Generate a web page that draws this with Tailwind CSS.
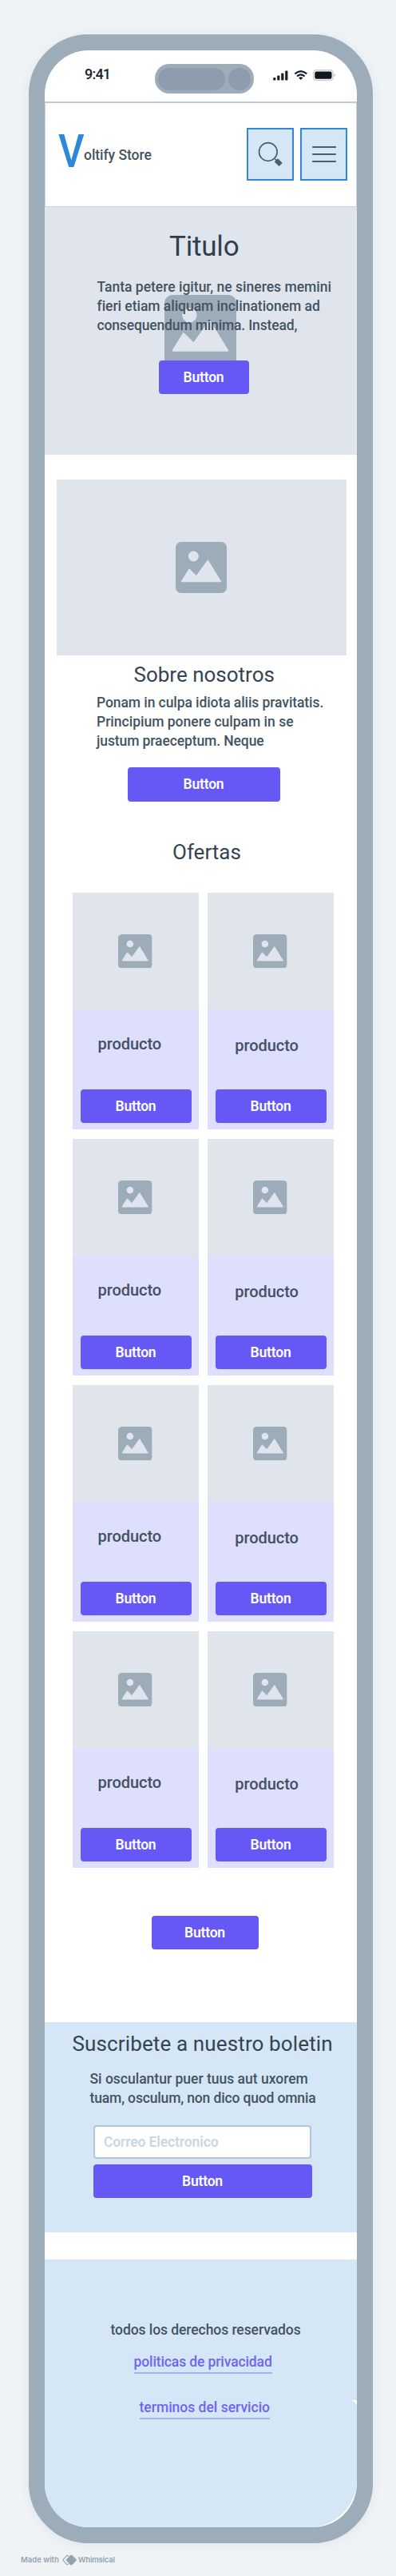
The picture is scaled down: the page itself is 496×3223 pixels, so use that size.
<!DOCTYPE html>
<html lang="es">
<head>
<meta charset="utf-8">
<title>Voltify Store</title>
<script src="https://cdn.jsdelivr.net/npm/@tailwindcss/browser@4"></script>
</head>
<body class="w-[496px] h-[3223px] overflow-hidden bg-[#eff3f6] font-['Roboto','Liberation_Sans',sans-serif] text-[17.5px] leading-6 font-medium text-[#435361]">
<svg class="hidden">
  <symbol id="picture" viewBox="0 0 64 64">
    <rect width="64" height="64" rx="7" fill="#9dacb9"/>
    <circle cx="22.3" cy="18" r="6.5" fill="#e0e5ed"/>
    <path d="M7.6 49.5 17 34.3 26 43.2 40.3 23.4 56.2 49.5Z" fill="#e0e5ed" stroke="#e0e5ed" stroke-width="1.5" stroke-linejoin="round"/>
  </symbol>
</svg>

<div class="ml-9 mt-[43px] w-[431px] h-[3139px] rounded-[75px] border-[20px] border-[#9dacb9] bg-[#9dacb9] shadow-[0_2px_14px_rgba(60,80,100,0.08)]">
<div class="w-[391px] h-[3099px] rounded-[55px] bg-white overflow-hidden">

  <!-- Status bar -->
  <div class="flex h-[64px] items-start">
    <div class="ml-[50px] mt-[18px] w-[87.5px] text-[18px] tracking-[-0.8px] text-[#1a232c]">9:41</div>
    <div class="mt-[17px] flex h-[37px] w-[124px] items-center gap-1 rounded-[18px] bg-[#9dacb9] pl-[4px]">
      <div class="h-7 w-[84px] rounded-full bg-[#8d9dae]"></div>
      <div class="h-7 w-7 rounded-full bg-[#8d9dae]"></div>
    </div>
    <svg class="ml-[24px] mt-[24px]" width="79" height="15" viewBox="0 0 79 15">
      <g fill="#16202a">
        <rect x="0.2" y="10" width="3.2" height="3.6" rx="1"/><rect x="5.2" y="7.6" width="3.2" height="6" rx="1"/><rect x="10.2" y="4.4" width="3.2" height="9.2" rx="1"/><rect x="15.2" y="1.5" width="3.2" height="12.1" rx="1"/>
        <path d="M32.1 10.2 34.8 13 37.5 10.2Q34.8 8.4 32.1 10.2Z"/>
      </g>
      <path d="M27.4 5.4Q34.8-1 42.2 5.4M30 8.5Q34.8 4.4 39.6 8.5" fill="none" stroke="#16202a" stroke-width="2.2"/>
      <rect x="50.6" y="0.8" width="24.6" height="12.6" rx="3.6" fill="#fff" stroke="#cfcfd1" stroke-width="1.5"/>
      <rect x="52.3" y="2.5" width="21.2" height="9.2" rx="2" fill="#0e1821"/>
      <path d="M76.5 5Q78.3 5.5 78.3 7T76.5 9.2Z" fill="#cfcfd1"/>
    </svg>
  </div>

  <!-- Header -->
  <header class="flex h-[132px] border border-t-2 border-[#cbd6e0] border-t-[#bccbd7] bg-white">
    <div class="ml-[16px] mt-[28px] w-[33px] shrink-0 origin-left scale-x-[0.87] text-[58px] leading-[64px] font-medium text-[#2d88dc]">V</div>
    <div class="mt-[53px] w-[203px] shrink-0 tracking-[-0.05px]"><span class="-ml-px">oltify Store</span></div>
    <div class="mt-[31px] flex h-[66px] gap-2">
      <div class="flex w-[59px] items-center justify-center border-2 border-[#2d88dc] bg-[#d5e6f6]">
        <svg width="32" height="32" viewBox="0 0 32 32" fill="none"><circle cx="12.8" cy="13" r="11.3" stroke="#4d5e6b" stroke-width="1.7"/><path d="M21.3 21.8 24 24.5" stroke="#4d5e6b" stroke-width="1.7"/><path d="M22.9 23.3 28.6 29" stroke="#4d5e6b" stroke-width="6"/></svg>
      </div>
      <div class="flex w-[59px] items-center justify-center border-2 border-[#2d88dc] bg-[#d5e6f6]">
        <svg width="30" height="22" viewBox="0 0 30 22"><path d="M0.8 2H29.2M0.8 11H29.2M0.8 20H29.2" stroke="#4d5e6b" stroke-width="1.8" stroke-linecap="round"/></svg>
      </div>
    </div>
  </header>

  <!-- Hero -->
  <section class="relative h-[310px] bg-[#e0e5ed] pt-[30px]">
    <svg class="absolute left-[150px] top-[110px] h-[90px] w-[90px]"><use href="#picture"/></svg>
    <div class="relative">
      <h1 class="ml-[156px] text-[35px] leading-10 font-normal tracking-[-0.2px] text-[#2f3f4c]">Titulo</h1>
      <p class="ml-[65.5px] mt-[18px] whitespace-nowrap">Tanta petere igitur, ne sineres memini<br><span class="tracking-[-0.03px]">fieri etiam aliquam inclinationem ad</span><br><span class="tracking-[-0.15px]">consequendum minima. Instead,</span></p>
      <button class="ml-[142.5px] mt-8 block h-[42px] w-[113px] rounded-[4px] bg-[#6558f5] font-semibold tracking-[-0.2px] text-white">Button</button>
    </div>
  </section>

  <!-- About -->
  <section class="h-[548px] pt-[31px]">
    <div class="ml-[14.5px] flex h-[220px] w-[363.5px] items-center justify-center bg-[#e0e5ed]"><svg class="h-16 w-16"><use href="#picture"/></svg></div>
    <h2 class="ml-[111.5px] mt-2 text-[26px] leading-8 font-normal text-[#344451]">Sobre nosotros</h2>
    <p class="ml-[65px] mt-[7px] whitespace-nowrap"><span class="tracking-[-0.08px]">Ponam in culpa idiota aliis pravitatis.</span><br>Principium ponere culpam in se<br><span class="tracking-[-0.1px]">justum praeceptum. Neque</span></p>
    <button class="ml-[103.5px] mt-[21px] block h-[42.5px] w-[191px] rounded-[4px] bg-[#6558f5] font-semibold tracking-[-0.2px] text-white">Button</button>
    <h2 class="ml-[160px] mt-[47px] text-[26px] leading-8 font-normal text-[#344451]">Ofertas</h2>
  </section>

  <!-- Products -->
  <section id="products" class="ml-[34.5px] grid h-[1220px] w-[327.4px] grid-cols-2 content-start gap-x-[10.7px] gap-y-3"></section>

  <!-- See more -->
  <div class="h-[193px] pt-[60px]"><button class="ml-[133.5px] block h-[42px] w-[134px] rounded-[4px] bg-[#6558f5] font-semibold tracking-[-0.2px] text-white">Button</button></div>

  <!-- Newsletter -->
  <section class="h-[263px] bg-[#d5e6f6] pt-[11px]">
    <h2 class="ml-[34.5px] whitespace-nowrap text-[26px] leading-8 font-normal tracking-[0.13px] text-[#344451]">Suscribete a nuestro boletin</h2>
    <p class="ml-[56.5px] mt-4 whitespace-nowrap">Si osculantur puer tuus aut uxorem<br><span class="tracking-[-0.15px]">tuam, osculum, non dico quod omnia</span></p>
    <div class="ml-[61px] mt-[22px] flex h-[42px] w-[273px] items-center rounded-[4px] border-2 border-[#b5c5d4] bg-white pl-[11px] font-semibold tracking-[-0.12px] text-[#cad6e1]">Correo Electronico</div>
    <button class="ml-[60.5px] mt-[7px] block h-[42px] w-[274px] rounded-[4px] bg-[#6558f5] font-semibold tracking-[-0.2px] text-white">Button</button>
  </section>

  <!-- Footer -->
  <footer class="relative mt-[34px] flex h-[335px] flex-col items-start rounded-br-[60px] bg-[#d5e6f6] pt-[76px] leading-6">
    <p class="ml-[82.5px] tracking-[-0.07px]">todos los derechos reservados</p>
    <a class="ml-[111.5px] mt-4 h-[27px] whitespace-nowrap border-b-2 border-[#a9aff6] tracking-[-0.11px] text-[#6f64f6]">politicas de privacidad</a>
    <a class="ml-[118.5px] mt-[30px] h-[27px] whitespace-nowrap border-b-2 border-[#a9aff6] text-[#6f64f6]">terminos del servicio</a>
    <svg class="absolute right-0 top-[176px]" width="6" height="7" viewBox="0 0 6 7"><path d="M0 0H6V7Q4 2 0 0Z" fill="#fff"/></svg>
  </footer>
</div>
</div>

<div class="ml-[26px] mt-[13px] flex h-4 items-center font-['Inter','Roboto',sans-serif] text-[9.5px] font-semibold text-[#95a3b1]">
  <span>Made with</span>
  <svg class="ml-[4px] mr-[2px]" width="18" height="14" viewBox="0 0 18 14"><path d="M8.2 2.6 7 1.4Q6.4.9 5.8 1.4L1.2 6.3Q.7 7 1.2 7.7L5.8 12.6Q6.4 13.1 7 12.6L8.2 11.4" fill="none" stroke="#95a3b1" stroke-width="1.2"/><path d="M10.2 1Q11.3.1 12.4 1L17.3 6Q18.1 7 17.3 8L12.4 13Q11.3 13.9 10.2 13L5.3 8Q4.5 7 5.3 6Z" fill="#95a3b1"/></svg>
  <span class="tracking-[-0.2px]">Whimsical</span>
</div>

<script>
const card = (text) => `
  <article class="h-[296px] bg-[#dedefd]">
    <div class="flex h-[146px] items-center justify-center bg-[#e0e5ec]"><svg class="h-[42.6px] w-[42.6px]"><use href="#picture"/></svg></div>
    <div class="h-[100px] text-[20px] font-medium tracking-[-0.05px] text-[#435160]">${text}</div>
    <button class="ml-[10px] block h-[42px] w-[139px] rounded-[4px] bg-[#6558f5] font-semibold tracking-[-0.2px] text-white">Button</button>
  </article>`;
const left = card('<p class="pl-[32px] pt-[31px]">producto</p>');
const right = card('<p class="pl-[34.7px] pt-[33px]">producto</p>');
document.getElementById('products').innerHTML = (left + right).repeat(4);
</script>
</body>
</html>
